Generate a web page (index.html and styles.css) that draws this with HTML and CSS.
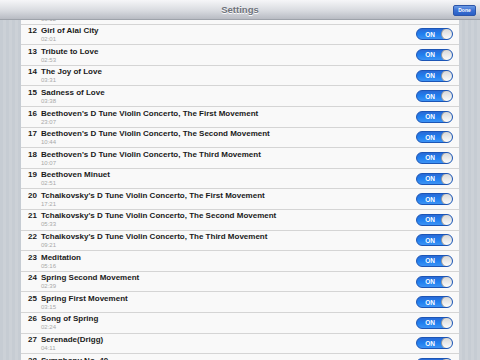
FILE: index.html
```html
<!DOCTYPE html>
<html lang="en">
  <head>
    <meta charset="UTF-8" />
    <title>Settings</title>
    <link rel="stylesheet" href="styles.css">
  </head>
  <body>
    <header class="navBar">
      <h1>Settings</h1>
      <button class="doneBtn">Done</button>
    </header>
    <main class="content">
      <ul class="trackList">
        <li class="track"><div class="info"><div class="title"><span class="num">11</span>Flower Dance</div><div class="time">03:12</div></div><span class="toggle"><span class="onLabel">ON</span><span class="knob"></span></span></li>
        <li class="track"><div class="info"><div class="title"><span class="num">12</span>Girl of Alai City</div><div class="time">02:01</div></div><span class="toggle"><span class="onLabel">ON</span><span class="knob"></span></span></li>
        <li class="track"><div class="info"><div class="title"><span class="num">13</span>Tribute to Love</div><div class="time">02:53</div></div><span class="toggle"><span class="onLabel">ON</span><span class="knob"></span></span></li>
        <li class="track"><div class="info"><div class="title"><span class="num">14</span>The Joy of Love</div><div class="time">03:31</div></div><span class="toggle"><span class="onLabel">ON</span><span class="knob"></span></span></li>
        <li class="track"><div class="info"><div class="title"><span class="num">15</span>Sadness of Love</div><div class="time">03:38</div></div><span class="toggle"><span class="onLabel">ON</span><span class="knob"></span></span></li>
        <li class="track"><div class="info"><div class="title"><span class="num">16</span>Beethoven's D Tune Violin Concerto, The First Movement</div><div class="time">23:07</div></div><span class="toggle"><span class="onLabel">ON</span><span class="knob"></span></span></li>
        <li class="track"><div class="info"><div class="title"><span class="num">17</span>Beethoven's D Tune Violin Concerto, The Second Movement</div><div class="time">10:44</div></div><span class="toggle"><span class="onLabel">ON</span><span class="knob"></span></span></li>
        <li class="track"><div class="info"><div class="title"><span class="num">18</span>Beethoven's D Tune Violin Concerto, The Third Movement</div><div class="time">10:07</div></div><span class="toggle"><span class="onLabel">ON</span><span class="knob"></span></span></li>
        <li class="track"><div class="info"><div class="title"><span class="num">19</span>Beethoven Minuet</div><div class="time">02:51</div></div><span class="toggle"><span class="onLabel">ON</span><span class="knob"></span></span></li>
        <li class="track"><div class="info"><div class="title"><span class="num">20</span>Tchaikovsky's D Tune Violin Concerto, The First Movement</div><div class="time">17:21</div></div><span class="toggle"><span class="onLabel">ON</span><span class="knob"></span></span></li>
        <li class="track"><div class="info"><div class="title"><span class="num">21</span>Tchaikovsky's D Tune Violin Concerto, The Second Movement</div><div class="time">05:33</div></div><span class="toggle"><span class="onLabel">ON</span><span class="knob"></span></span></li>
        <li class="track"><div class="info"><div class="title"><span class="num">22</span>Tchaikovsky's D Tune Violin Concerto, The Third Movement</div><div class="time">09:21</div></div><span class="toggle"><span class="onLabel">ON</span><span class="knob"></span></span></li>
        <li class="track"><div class="info"><div class="title"><span class="num">23</span>Meditation</div><div class="time">05:16</div></div><span class="toggle"><span class="onLabel">ON</span><span class="knob"></span></span></li>
        <li class="track"><div class="info"><div class="title"><span class="num">24</span>Spring Second Movement</div><div class="time">02:39</div></div><span class="toggle"><span class="onLabel">ON</span><span class="knob"></span></span></li>
        <li class="track"><div class="info"><div class="title"><span class="num">25</span>Spring First Movement</div><div class="time">03:15</div></div><span class="toggle"><span class="onLabel">ON</span><span class="knob"></span></span></li>
        <li class="track"><div class="info"><div class="title"><span class="num">26</span>Song of Spring</div><div class="time">02:24</div></div><span class="toggle"><span class="onLabel">ON</span><span class="knob"></span></span></li>
        <li class="track"><div class="info"><div class="title"><span class="num">27</span>Serenade(Drigg)</div><div class="time">04:11</div></div><span class="toggle"><span class="onLabel">ON</span><span class="knob"></span></span></li>
        <li class="track"><div class="info"><div class="title"><span class="num">28</span>Symphony No. 40</div><div class="time">03:50</div></div><span class="toggle"><span class="onLabel">ON</span><span class="knob"></span></span></li>
      </ul>
    </main>
  </body>
</html>
```

FILE: styles.css
```css
html,
body {
  margin: 0;
  height: 100%;
}
body {
  display: flex;
  flex-direction: column;
  font-family: 'Liberation Sans', Arial, sans-serif;
  background: repeating-linear-gradient(90deg, #c6ccd3 0 3px, #ccd1d7 3px 6px);
  overflow: hidden;
}
.navBar {
  flex: 0 0 20px;
  display: flex;
  align-items: center;
  justify-content: center;
  position: relative;
  background: linear-gradient(#f6f6f8, #d9dbe0 55%, #b8bbc3);
  border-bottom: 1px solid #9ea2aa;
  box-sizing: border-box;
  z-index: 1;
}
.navBar h1 {
  margin: 0;
  font-size: 9.5px;
  font-weight: bold;
  color: #6e727b;
  text-shadow: 0 1px 0 #fff;
}
.doneBtn {
  position: absolute;
  right: 4px;
  top: 5px;
  width: 23px;
  height: 11px;
  padding: 0;
  border: 1px solid #2c55a8;
  border-radius: 2px;
  background: linear-gradient(#6c9be6, #3a6fd2 50%, #2a5fc6);
  color: #fff;
  font-family: inherit;
  font-size: 5px;
  font-weight: bold;
  line-height: 9px;
}
.content {
  flex: 1;
  overflow: hidden;
  padding: 0 21px;
}
.trackList {
  list-style: none;
  margin: -16px 0 0;
  padding: 0;
  background: #f8f8f8;
}
.track {
  height: 20.6px;
  box-sizing: border-box;
  display: flex;
  align-items: center;
  padding: 0 6px 0 7px;
  border-bottom: 1px solid #d5d5d5;
  background: #f9f9f9;
}
.info {
  flex: 1;
  padding-top: 2px;
}
.title {
  font-size: 8px;
  font-weight: bold;
  color: #1a1a1a;
  line-height: 9px;
}
.num {
  display: inline-block;
  width: 13px;
}
.time {
  padding-left: 13px;
  font-size: 6px;
  color: #a8a8a8;
  line-height: 9.5px;
}
.toggle {
  width: 37px;
  height: 12px;
  box-sizing: border-box;
  display: flex;
  align-items: center;
  border-radius: 6px;
  border: 1px solid #1c55b5;
  background: linear-gradient(#2a6ad6, #1f7ff0 50%, #3d93f4);
  overflow: hidden;
}
.onLabel {
  flex: 1;
  text-align: center;
  color: #fff;
  font-size: 6.5px;
  font-weight: bold;
  padding-left: 2px;
}
.knob {
  width: 12px;
  height: 12px;
  box-sizing: border-box;
  margin-right: -1px;
  border-radius: 50%;
  border: 1px solid #9a9a9a;
  background: linear-gradient(#d8d8d8, #fcfcfc);
}
```
